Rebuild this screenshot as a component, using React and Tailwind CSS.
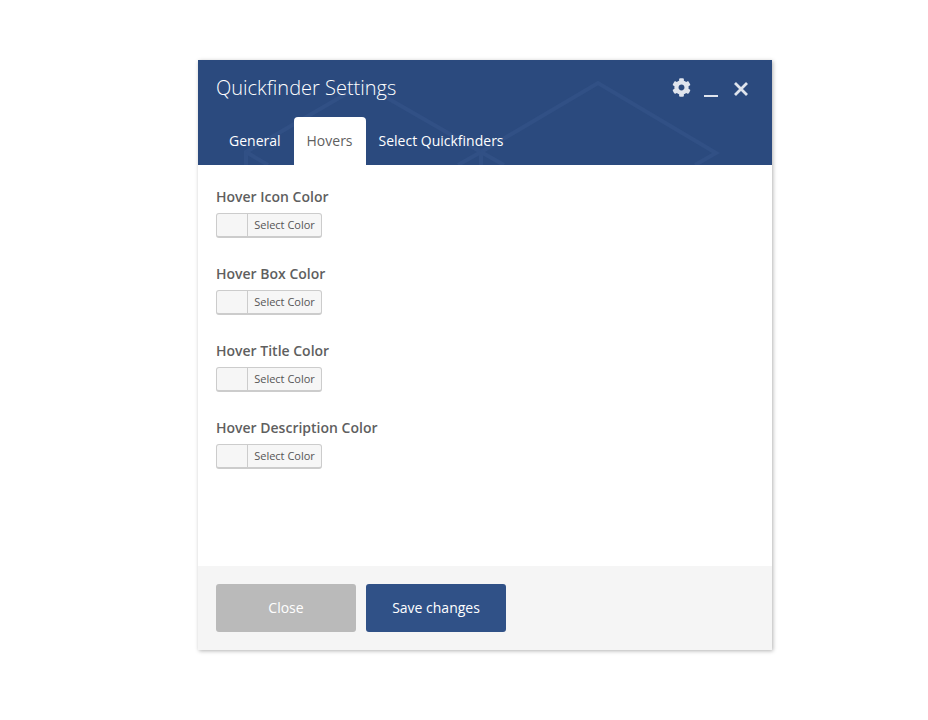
import { FaCog } from "react-icons/fa";

const fields = [
  "Hover Icon Color",
  "Hover Box Color",
  "Hover Title Color",
  "Hover Description Color",
];

function ColorField({ label }) {
  return (
    <div className="mb-[26px]">
      <div className="text-[14px] leading-[20px] font-semibold text-[#5f5f5f] mb-[6px]">{label}</div>
      <div className="flex w-[106px] h-[25px] bg-[#f6f6f6] border border-[#cccccc] border-b-[2px] rounded-[3px]">
        <div className="w-[31px] border-r border-[#cccccc]" />
        <div className="flex-1 text-center text-[11px] leading-[22px] text-[#555555]">Select Color</div>
      </div>
    </div>
  );
}

export default function App() {
  return (
    <div className="min-h-[720px] bg-white pt-[60px] font-['Open_Sans','Noto_Sans',sans-serif]">
      <div className="ml-[198px] w-[574px] h-[590px] flex flex-col bg-white shadow-[1px_1px_4px_rgba(0,0,0,0.3)]">
        <div className="relative h-[105px] bg-[#2b4a7e] overflow-hidden">
          {/* faint diamonds behind the header */}
          <svg className="absolute inset-0" width="574" height="105" fill="none" stroke="#315085" strokeWidth="4">
            <path d="M48 105 L48 92 L165 24 L283 92 L283 105" />
            <path d="M283 92 L400 23 L518 93 L497 105" />
            <path d="M48 92 L70 105 M283 92 L260 105 M283 92 L306 105" />
          </svg>
          <div className="relative flex justify-between pl-[18px] pr-[23px] pt-[13px] h-[57px]">
            <div className="text-[20px] leading-[30px] font-light text-white">Quickfinder Settings</div>
            <div className="flex items-start pt-[5px] text-[#dfe4ed]">
              <FaCog size={19} />
              <div className="ml-[13px] mt-[17px] w-[14px] h-[2px] bg-[#dfe4ed]" />
              <svg className="ml-[15px] mt-[3px]" width="16" height="16" viewBox="0 0 16 16" fill="none" stroke="currentColor" strokeWidth="2.8">
                <path d="M2 2 L14 14 M14 2 L2 14" />
              </svg>
            </div>
          </div>
          <div className="relative flex pl-[18px] text-[14px] h-[48px]">
            <div className="px-[13px] leading-[48px] text-white">General</div>
            <div className="px-[13px] leading-[48px] bg-white rounded-t-[4px] text-[#5f5f5f]">Hovers</div>
            <div className="px-[13px] leading-[48px] text-white">Select Quickfinders</div>
          </div>
        </div>
        <div className="flex-1 pl-[18px] pt-[22px]">
          {fields.map((f) => (
            <ColorField key={f} label={f} />
          ))}
        </div>
        <div className="h-[84px] bg-[#f5f5f5] flex gap-[10px] pl-[18px] pt-[18px]">
          <button className="w-[140px] h-[48px] pb-[2px] rounded-[3px] bg-[#bababa] text-white text-[14px]">Close</button>
          <button className="w-[140px] h-[48px] pb-[2px] rounded-[3px] bg-[#305187] text-white text-[14px]">Save changes</button>
        </div>
      </div>
    </div>
  );
}
